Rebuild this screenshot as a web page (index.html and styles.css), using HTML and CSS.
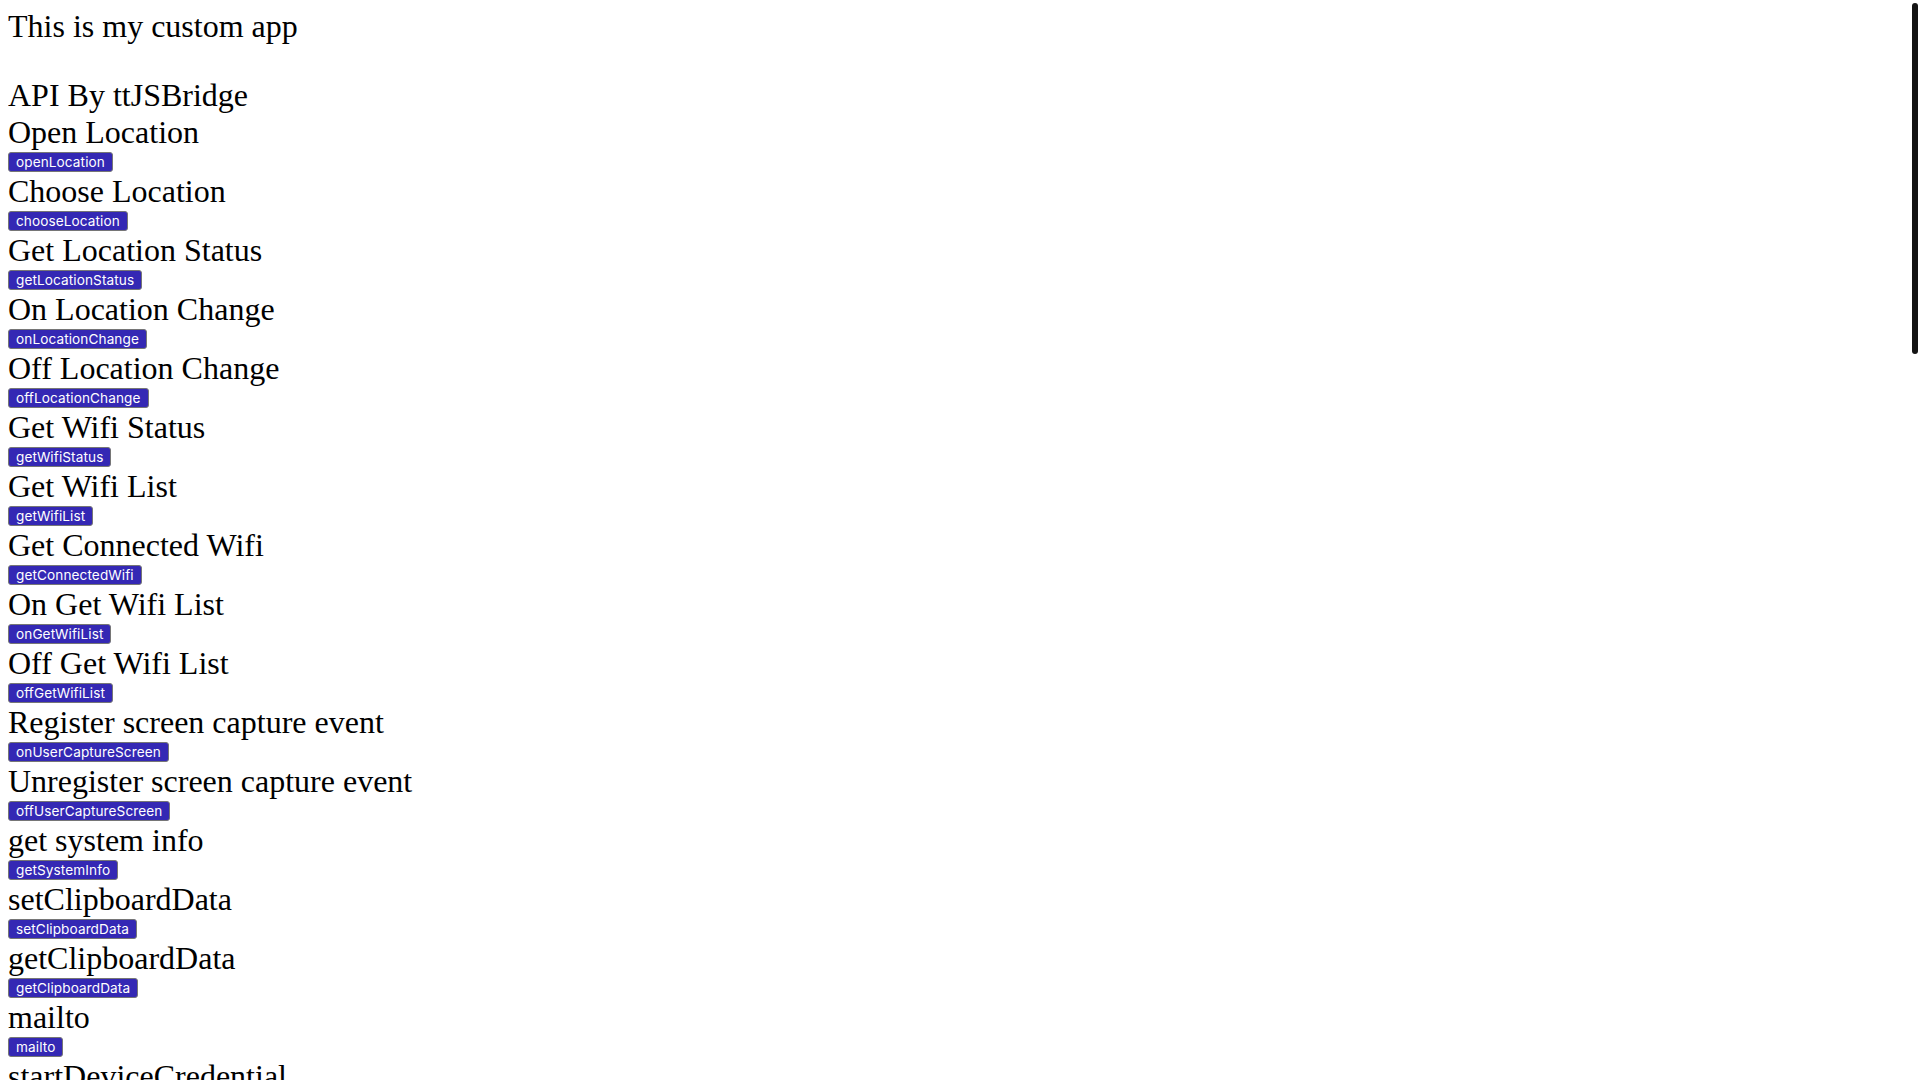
FILE: index.html
```html
<!DOCTYPE html>
<html lang="en">
<head>
<meta charset="utf-8">
<title>This is my custom app</title>
<link rel="stylesheet" href="styles.css">
</head>
<body>
<div class="app-title">This is my custom app</div>
<div class="section-title">API By ttJSBridge</div>
<div class="api-list">
  <div class="api-item"><div class="api-name">Open Location</div><div class="api-row"><button class="api-btn">openLocation</button></div></div>
  <div class="api-item"><div class="api-name">Choose Location</div><div class="api-row"><button class="api-btn">chooseLocation</button></div></div>
  <div class="api-item"><div class="api-name">Get Location Status</div><div class="api-row"><button class="api-btn">getLocationStatus</button></div></div>
  <div class="api-item"><div class="api-name">On Location Change</div><div class="api-row"><button class="api-btn">onLocationChange</button></div></div>
  <div class="api-item"><div class="api-name">Off Location Change</div><div class="api-row"><button class="api-btn">offLocationChange</button></div></div>
  <div class="api-item"><div class="api-name">Get Wifi Status</div><div class="api-row"><button class="api-btn">getWifiStatus</button></div></div>
  <div class="api-item"><div class="api-name">Get Wifi List</div><div class="api-row"><button class="api-btn">getWifiList</button></div></div>
  <div class="api-item"><div class="api-name">Get Connected Wifi</div><div class="api-row"><button class="api-btn">getConnectedWifi</button></div></div>
  <div class="api-item"><div class="api-name">On Get Wifi List</div><div class="api-row"><button class="api-btn">onGetWifiList</button></div></div>
  <div class="api-item"><div class="api-name">Off Get Wifi List</div><div class="api-row"><button class="api-btn">offGetWifiList</button></div></div>
  <div class="api-item"><div class="api-name">Register screen capture event</div><div class="api-row"><button class="api-btn">onUserCaptureScreen</button></div></div>
  <div class="api-item"><div class="api-name">Unregister screen capture event</div><div class="api-row"><button class="api-btn">offUserCaptureScreen</button></div></div>
  <div class="api-item"><div class="api-name">get system info</div><div class="api-row"><button class="api-btn">getSystemInfo</button></div></div>
  <div class="api-item"><div class="api-name">setClipboardData</div><div class="api-row"><button class="api-btn">setClipboardData</button></div></div>
  <div class="api-item"><div class="api-name">getClipboardData</div><div class="api-row"><button class="api-btn">getClipboardData</button></div></div>
  <div class="api-item"><div class="api-name">mailto</div><div class="api-row"><button class="api-btn">mailto</button></div></div>
  <div class="api-item"><div class="api-name">startDeviceCredential</div><div class="api-row"><button class="api-btn">startDeviceCredential</button></div></div>
</div>
<div class="scroll-thumb"></div>
</body>
</html>
```

FILE: styles.css
```css
html {
  scrollbar-width: none;
}
html::-webkit-scrollbar {
  display: none;
}
body {
  margin: 8px;
  font-family: "Liberation Serif", "Times New Roman", serif;
  color: #000;
  background: #fff;
}
.app-title,
.section-title,
.api-name {
  font-size: 32px;
  line-height: 37px;
  white-space: nowrap;
}
.app-title {
  margin-bottom: 32px;
}
.api-row {
  display: flex;
  align-items: flex-start;
  height: 22px;
  padding-top: 1px;
  box-sizing: border-box;
}
.api-btn {
  font-family: Inter, "Liberation Sans", sans-serif;
  font-size: 13.6px;
  letter-spacing: 0.1px;
  line-height: 16px;
  height: 20px;
  padding: 1px 7px;
  margin: 0;
  border: 1px solid #767676;
  border-radius: 3px;
  background: #3428b4;
  color: #fff;
  box-sizing: border-box;
  white-space: nowrap;
}
.scroll-thumb {
  position: fixed;
  top: 3px;
  right: 2px;
  width: 6px;
  height: 351px;
  border-radius: 3px;
  background: #141414;
}
```
